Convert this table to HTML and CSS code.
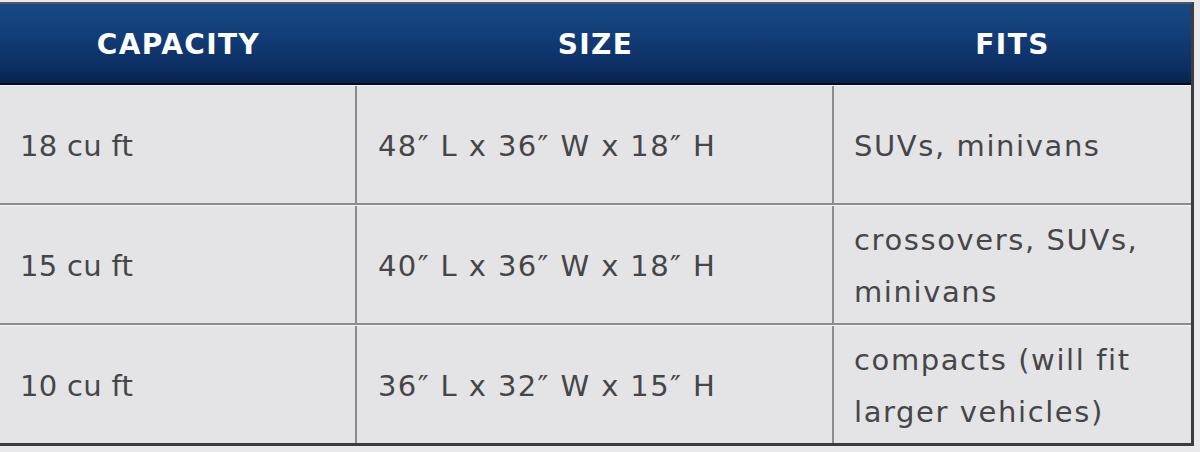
FILE: index.html
```html
<!DOCTYPE html>
<html>
<head>
<meta charset="utf-8">
<link rel="stylesheet" href="styles.css">
</head>
<body>
<div class="sheet">
  <div class="table">
    <div class="head">
      <div class="th">CAPACITY</div>
      <div class="th">SIZE</div>
      <div class="th">FITS</div>
    </div>
    <div class="row">
      <div class="td">18 cu ft</div>
      <div class="td">48″ L x 36″ W x 18″ H</div>
      <div class="td">SUVs, minivans</div>
    </div>
    <div class="row">
      <div class="td">15 cu ft</div>
      <div class="td">40″ L x 36″ W x 18″ H</div>
      <div class="td">crossovers, SUVs,<br>minivans</div>
    </div>
    <div class="row last">
      <div class="td">10 cu ft</div>
      <div class="td">36″ L x 32″ W x 15″ H</div>
      <div class="td">compacts (will fit<br>larger vehicles)</div>
    </div>
  </div>
</div>
</body>
</html>
```
FILE: styles.css
```css
html, body {
  margin: 0;
  padding: 0;
  background: #e8e8ea;
}
.sheet {
  width: 1200px;
  height: 452px;
  padding-top: 2px;
  box-sizing: border-box;
  background: #e9e9eb;
}
.table {
  width: 1194px;
  border-top: 2px solid #50555e;
  border-right: 3px solid #3c3c3e;
  border-bottom: 3px solid #3c3c3e;
  box-sizing: border-box;
  font-family: "DejaVu Sans", "Liberation Sans", sans-serif;
}
.head {
  display: grid;
  grid-template-columns: 357px 477px 1fr;
  height: 81px;
  background: linear-gradient(#174984 0%, #123d78 40%, #0c2c5f 85%, #08214b 100%);
  border-bottom: 2px solid #030c22;
  box-sizing: border-box;
}
.th {
  color: #ffffff;
  font-weight: 700;
  font-size: 28px;
  letter-spacing: 1.4px;
  display: flex;
  align-items: center;
  justify-content: center;
  padding-top: 2px;
}
.row {
  display: grid;
  grid-template-columns: 357px 477px 1fr;
  height: 120px;
  background: #e4e4e6;
  border-top: 1px solid #f2f2f4;
  border-bottom: 2px solid #8c8c8e;
  box-sizing: border-box;
}
.row.last {
  border-bottom: none;
  height: 118px;
}
.td {
  color: #464648;
  font-size: 29px;
  line-height: 52px;
  letter-spacing: 0.3px;
  display: flex;
  align-items: center;
  padding-left: 20px;
  padding-top: 3px;
  border-right: 2px solid #8c8c8e;
}
.td:nth-child(2) {
  padding-left: 21px;
  letter-spacing: 1.4px;
}
.td:last-child {
  border-right: none;
  letter-spacing: 1.6px;
}
```
